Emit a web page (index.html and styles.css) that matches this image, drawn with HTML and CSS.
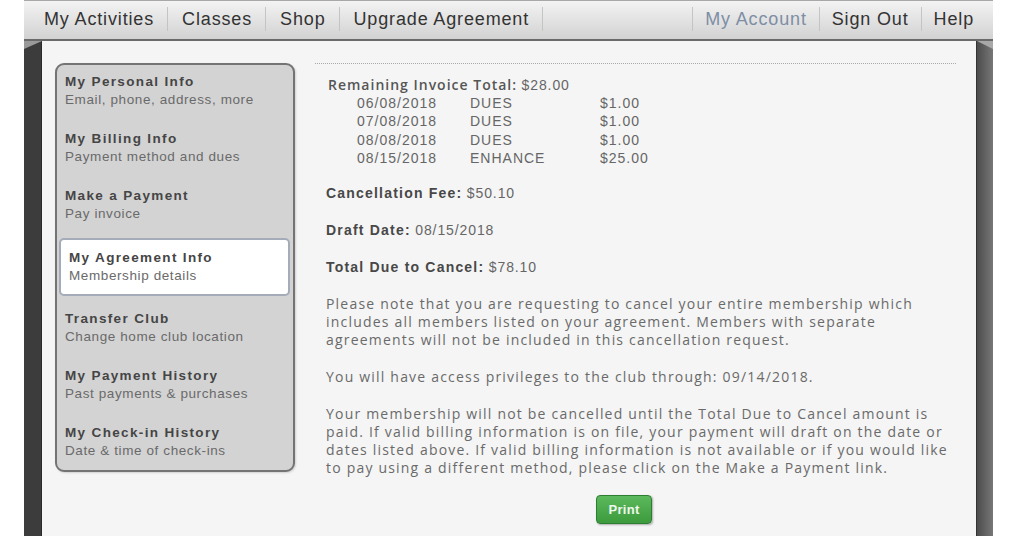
FILE: index.html
```html
<!DOCTYPE html>
<html>
<head>
<meta charset="utf-8">
<link rel="stylesheet" href="styles.css">
</head>
<body>
<div class="frame">
  <nav class="topnav">
    <div class="nav-left">
      <a class="nav-item">My Activities</a>
      <a class="nav-item">Classes</a>
      <a class="nav-item">Shop</a>
      <a class="nav-item">Upgrade Agreement</a>
    </div>
    <div class="nav-right">
      <a class="nav-item active">My Account</a>
      <a class="nav-item">Sign Out</a>
      <a class="nav-item">Help</a>
    </div>
  </nav>
  <div class="body-row">
    <div class="strip strip-left"></div>
    <div class="panel">
      <aside class="sidebar">
        <div class="side-item">
          <div class="side-title">My Personal Info</div>
          <div class="side-sub">Email, phone, address, more</div>
        </div>
        <div class="side-item">
          <div class="side-title">My Billing Info</div>
          <div class="side-sub">Payment method and dues</div>
        </div>
        <div class="side-item">
          <div class="side-title">Make a Payment</div>
          <div class="side-sub">Pay invoice</div>
        </div>
        <div class="side-item current">
          <div class="side-title">My Agreement Info</div>
          <div class="side-sub">Membership details</div>
        </div>
        <div class="side-item">
          <div class="side-title">Transfer Club</div>
          <div class="side-sub">Change home club location</div>
        </div>
        <div class="side-item">
          <div class="side-title">My Payment History</div>
          <div class="side-sub">Past payments &amp; purchases</div>
        </div>
        <div class="side-item last">
          <div class="side-title">My Check-in History</div>
          <div class="side-sub">Date &amp; time of check-ins</div>
        </div>
      </aside>
      <main class="main">
        <div class="invoice">
          <div class="inv-head"><span class="inv-label">Remaining Invoice Total:</span> <span class="val">$28.00</span></div>
          <div class="inv-row"><span class="c-date">06/08/2018</span><span class="c-type">DUES</span><span class="c-amt">$1.00</span></div>
          <div class="inv-row"><span class="c-date">07/08/2018</span><span class="c-type">DUES</span><span class="c-amt">$1.00</span></div>
          <div class="inv-row"><span class="c-date">08/08/2018</span><span class="c-type">DUES</span><span class="c-amt">$1.00</span></div>
          <div class="inv-row"><span class="c-date">08/15/2018</span><span class="c-type">ENHANCE</span><span class="c-amt">$25.00</span></div>
        </div>
        <div class="field"><span class="f-label">Cancellation Fee:</span> <span class="val">$50.10</span></div>
        <div class="field"><span class="f-label">Draft Date:</span> <span class="val">08/15/2018</span></div>
        <div class="field"><span class="f-label">Total Due to Cancel:</span> <span class="val">$78.10</span></div>
        <p class="note">Please note that you are requesting to cancel your entire membership which includes all members listed on your agreement. Members with separate agreements will not be included in this cancellation request.</p>
        <p class="note">You will have access privileges to the club through: 09/14/2018.</p>
        <p class="note">Your membership will not be cancelled until the Total Due to Cancel amount is paid. If valid billing information is on file, your payment will draft on the date or dates listed above. If valid billing information is not available or if you would like to pay using a different method, please click on the Make a Payment link.</p>
        <div class="actions"><button class="btn-print">Print</button></div>
      </main>
    </div>
    <div class="strip strip-right"></div>
  </div>
</div>
</body>
</html>
```

FILE: styles.css
```css
html, body {
  margin: 0;
  padding: 0;
  background: #ffffff;
  height: 100%;
}
body {
  font-family: "Liberation Sans", Arial, sans-serif;
  overflow: hidden;
}
.frame {
  margin-left: 24px;
  width: 969px;
  height: 536px;
  display: flex;
  flex-direction: column;
}
.topnav {
  height: 38px;
  display: flex;
  justify-content: space-between;
  align-items: center;
  background: linear-gradient(#f3f3f3, #d2d2d2);
  border-top: 1px solid #a8a8a8;
  border-bottom: 2px solid #6a6a6a;
  flex: none;
}
.nav-left, .nav-right {
  display: flex;
  align-items: center;
}
.nav-left { padding-left: 6px; }
.nav-right { padding-right: 7px; }
.nav-item {
  font-size: 18px;
  letter-spacing: 0.85px;
  color: #333;
  line-height: 24px;
  padding: 0 13px 0 14px;
  margin-top: -2px;
}
.nav-left .nav-item { border-right: 1px solid #c4c4c4; }
.nav-left .nav-item:first-child { padding-left: 14px; }
.nav-right .nav-item { border-left: 1px solid #c4c4c4; padding: 0 12px; }
.nav-item.active { color: #7d8ea5; }

.body-row {
  flex: 1;
  display: flex;
}
.strip {
  flex: none;
  position: relative;
}
.strip-left {
  width: 18px;
  background: #3c3c3c;
  border-right: 1px solid #2a2a2a;
  box-sizing: border-box;
}
.strip-left::before {
  content: "";
  position: absolute;
  left: 0; top: 0;
  border-top: 8px solid #9a9a9a;
  border-right: 18px solid transparent;
}
.strip-right {
  width: 17px;
  background: linear-gradient(to right, #4c4c4c, #777);
  border-left: 1px solid #333;
  box-sizing: border-box;
}
.strip-right::before {
  content: "";
  position: absolute;
  right: 0; top: 0;
  border-top: 8px solid #a8a8a8;
  border-left: 16px solid transparent;
}
.panel {
  flex: 1;
  background: #f5f5f5;
  display: flex;
  align-items: flex-start;
  padding: 22px 20px 0 13px;
}

.sidebar {
  width: 240px;
  box-sizing: border-box;
  flex: none;
  background: #d3d3d3;
  border: 2px solid #747474;
  border-radius: 9px;
  box-shadow: 1px 1px 2px rgba(0,0,0,0.15);
}
.side-item {
  padding: 8px 8px 13px 8px;
}
.side-item.last { padding-bottom: 10px; }
.side-item.current {
  margin: 2px 3px 6px 2px;
  padding: 9px 8px 9px 8px;
  background: #fff;
  border: 2px solid #a3acb8;
  border-radius: 5px;
}
.side-title {
  font-size: 13.5px;
  font-weight: bold;
  letter-spacing: 1.35px;
  color: #454545;
  line-height: 18px;
  white-space: nowrap;
}
.side-sub {
  font-size: 13.5px;
  letter-spacing: 0.6px;
  color: #6a6a6a;
  line-height: 18px;
  white-space: nowrap;
}

.main {
  flex: 1;
  margin-left: 20px;
  border-top: 1px dotted #a9a9a9;
  padding: 12px 0 0 11px;
  color: #666;
}
.invoice {
  margin-bottom: 17px;
}
.inv-head {
  line-height: 18px;
  padding-left: 2px;
}
.inv-label {
  font-family: "Open Sans", sans-serif;
  font-weight: 600;
  font-size: 14px;
  letter-spacing: 1px;
  color: #555;
}
.val {
  font-size: 14px;
  letter-spacing: 0.9px;
  color: #666;
}
.inv-row {
  display: flex;
  padding-left: 31px;
  font-size: 14px;
  letter-spacing: 1px;
  line-height: 18.3px;
  color: #666;
}
.c-date { width: 113px; }
.c-type { width: 130px; }
.field {
  line-height: 18px;
  margin-bottom: 19px;
}
.f-label {
  font-weight: bold;
  font-size: 14px;
  letter-spacing: 1.2px;
  color: #484848;
}
.note {
  margin: 0 0 19px 0;
  font-family: "Open Sans", sans-serif;
  font-size: 14px;
  letter-spacing: 1.2px;
  line-height: 18px;
  color: #6a6a6a;
}
.note:last-of-type { margin-bottom: 0; }
.actions {
  padding-top: 18px;
  padding-left: 270px;
}
.btn-print {
  width: 56px;
  height: 29px;
  border: 1px solid #2e7d32;
  border-radius: 4px;
  background: linear-gradient(#5cb85c, #3c9b3c);
  color: #eef7ee;
  font-family: "Liberation Sans", Arial, sans-serif;
  font-weight: bold;
  font-size: 13px;
  letter-spacing: 0.3px;
  box-shadow: 1px 1px 2px rgba(0,0,0,0.3);
  padding: 0;
}
```
